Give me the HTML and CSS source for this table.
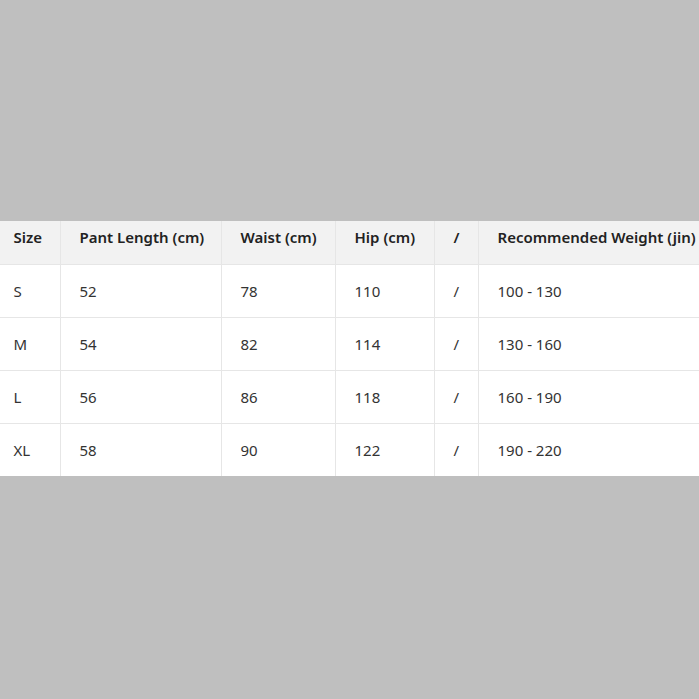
FILE: index.html
```html
<!DOCTYPE html>
<html>
<head>
<meta charset="utf-8">
<link rel="stylesheet" href="styles.css">
</head>
<body>
<div class="stage">
<table class="size-table">
  <colgroup>
    <col class="c1"><col class="c2"><col class="c3"><col class="c4"><col class="c5"><col class="c6">
  </colgroup>
  <thead>
    <tr><th>Size</th><th>Pant Length (cm)</th><th>Waist (cm)</th><th>Hip (cm)</th><th>/</th><th>Recommended Weight (jin)</th></tr>
  </thead>
  <tbody>
    <tr><td>S</td><td>52</td><td>78</td><td>110</td><td>/</td><td>100 - 130</td></tr>
    <tr><td>M</td><td>54</td><td>82</td><td>114</td><td>/</td><td>130 - 160</td></tr>
    <tr><td>L</td><td>56</td><td>86</td><td>118</td><td>/</td><td>160 - 190</td></tr>
    <tr><td>XL</td><td>58</td><td>90</td><td>122</td><td>/</td><td>190 - 220</td></tr>
  </tbody>
</table>
</div>
</body>
</html>
```
FILE: styles.css
```css
html, body {
  margin: 0;
  padding: 0;
  background: #bfbfbf;
}
.stage {
  box-sizing: border-box;
  width: 699px;
  height: 699px;
  padding-bottom: 2px;
  display: flex;
  align-items: center;
  justify-content: center;
  overflow: hidden;
}
.size-table {
  flex: none;
  width: 711px;
  table-layout: fixed;
  border-collapse: collapse;
  background: #fff;
  font-family: "Noto Sans", "Open Sans", sans-serif;
  font-size: 15px;
  color: #333;
}
.c1 { width: 66px; }
.c2 { width: 161px; }
.c3 { width: 114px; }
.c4 { width: 99px; }
.c5 { width: 44px; }
.c6 { width: 227px; }
.size-table th,
.size-table td {
  text-align: left;
  padding: 0 0 0 19px;
  border: 1px solid #e6e6e6;
  white-space: nowrap;
  overflow: hidden;
}
.size-table th {
  box-sizing: border-box;
  height: 43px;
  padding-top: 6px;
  vertical-align: top;
  background: #f2f2f2;
  font-weight: 600;
  color: #222;
  border-top: none;
}
.size-table td {
  height: 52px;
}
.size-table tbody tr:last-child td {
  border-bottom: none;
}
```
